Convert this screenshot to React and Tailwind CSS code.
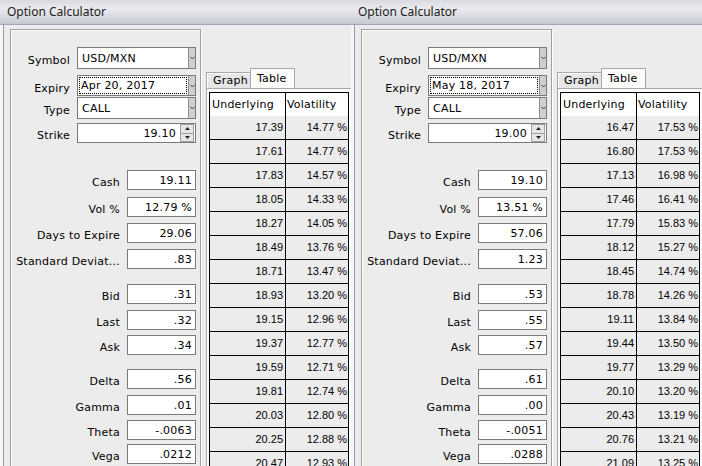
import React from "react";

const windows = [
  {
    expiry: "Apr 20, 2017",
    strike: "19.10",
    fields: [
      ["Cash", "19.11", "mt-[27px]"],
      ["Vol %", "12.79 %", "mt-[7px]"],
      ["Days to Expire", "29.06", "mt-[6px]"],
      ["Standard Deviat...", ".83", "mt-[6px]"],
      ["Bid", ".31", "mt-[15px]"],
      ["Last", ".32", "mt-[6px]"],
      ["Ask", ".34", "mt-[5px]"],
      ["Delta", ".56", "mt-[14px]"],
      ["Gamma", ".01", "mt-[6px]"],
      ["Theta", "-.0063", "mt-[5px]"],
      ["Vega", ".0212", "mt-[4px]"],
    ],
    rows: [
      ["17.39", "14.77"], ["17.61", "14.77"], ["17.83", "14.57"], ["18.05", "14.33"],
      ["18.27", "14.05"], ["18.49", "13.76"], ["18.71", "13.47"], ["18.93", "13.20"],
      ["19.15", "12.96"], ["19.37", "12.77"], ["19.59", "12.71"], ["19.81", "12.74"],
      ["20.03", "12.80"], ["20.25", "12.88"], ["20.47", "12.93"],
    ],
  },
  {
    expiry: "May 18, 2017",
    strike: "19.00",
    fields: [
      ["Cash", "19.10", "mt-[27px]"],
      ["Vol %", "13.51 %", "mt-[7px]"],
      ["Days to Expire", "57.06", "mt-[6px]"],
      ["Standard Deviat...", "1.23", "mt-[6px]"],
      ["Bid", ".53", "mt-[15px]"],
      ["Last", ".55", "mt-[6px]"],
      ["Ask", ".57", "mt-[5px]"],
      ["Delta", ".61", "mt-[14px]"],
      ["Gamma", ".00", "mt-[6px]"],
      ["Theta", "-.0051", "mt-[5px]"],
      ["Vega", ".0288", "mt-[4px]"],
    ],
    rows: [
      ["16.47", "17.53"], ["16.80", "17.53"], ["17.13", "16.98"], ["17.46", "16.41"],
      ["17.79", "15.83"], ["18.12", "15.27"], ["18.45", "14.74"], ["18.78", "14.26"],
      ["19.11", "13.84"], ["19.44", "13.50"], ["19.77", "13.29"], ["20.10", "13.20"],
      ["20.43", "13.19"], ["20.76", "13.21"], ["21.09", "13.25"],
    ],
  },
];

function DropButton() {
  return (
    <div className="w-[7px] h-full flex items-center justify-center border-l border-[#8c8c8c] bg-[#cfcfcf]">
      <svg width="5" height="4" viewBox="0 0 5 4">
        <path d="M0.5 0.8 L2.5 3 L4.5 0.8" fill="none" stroke="#404040" strokeWidth="1" />
      </svg>
    </div>
  );
}

function Combo({ value, focus }) {
  return (
    <div className="flex h-full w-full border border-[#7a7a7a] bg-white">
      <div className="flex-1 flex items-center p-[1px]">
        {focus ? (
          <div className="flex-1 h-full flex items-center pl-[1px] border border-dotted border-black">{value}</div>
        ) : (
          <div className="pl-[3px]">{value}</div>
        )}
      </div>
      <DropButton />
    </div>
  );
}

function Spinner({ value }) {
  return (
    <div className="flex items-center h-full w-full border border-[#7a7a7a] bg-white">
      <div className="flex-1 text-right pr-[4px]">{value}</div>
      <div className="w-[14px] h-[18px] mr-[1px] flex flex-col border border-[#a0a0a0] bg-[#e6e6e6]">
        <div className="flex-1 flex items-center justify-center border-b border-[#a0a0a0]">
          <svg width="5" height="3" viewBox="0 0 5 3"><path d="M0 3 L2.5 0 L5 3 Z" fill="#222" /></svg>
        </div>
        <div className="flex-1 flex items-center justify-center">
          <svg width="5" height="3" viewBox="0 0 5 3"><path d="M0 0 L2.5 3 L5 0 Z" fill="#222" /></svg>
        </div>
      </div>
    </div>
  );
}

function Window({ data }) {
  return (
    <div className="w-[351px] h-[466px] shrink-0 overflow-hidden flex flex-col bg-[#ececec]">
      {/* title bar */}
      <div className="h-[25px] shrink-0 flex items-center pl-[7px] border-b border-[#a4a4bc] bg-[linear-gradient(to_bottom,#d9dae1_0%,#ebebef_35%,#c6c8d3_100%)] font-['Noto_Sans',sans-serif] text-[12px] tracking-normal text-[#1c1c1c]">
        Option Calculator
      </div>

      <div className="flex-1 flex border-l-[3px] border-[#f6f6f8]">
        <div className="flex-1 flex items-start border-l border-[#9a98b8]">
          {/* inputs group */}
          <div className="ml-[6px] mt-[4px] w-[191px] h-[460px] shrink-0 border border-[#a0a0a0] shadow-[1px_1px_0_#fff,inset_1px_1px_0_#fff]">
            <div className="flex items-center h-[22px] mt-[17px]">
              <div className="w-[59px] text-right pt-[5px]">Symbol</div>
              <div className="ml-[7px] w-[119px] h-full"><Combo value="USD/MXN" /></div>
            </div>
            <div className="flex items-center h-[21px] mt-[6px]">
              <div className="w-[59px] text-right pt-[5px]">Expiry</div>
              <div className="ml-[7px] w-[119px] h-full"><Combo value={data.expiry} focus /></div>
            </div>
            <div className="flex items-center h-[22px] mt-[1px]">
              <div className="w-[59px] text-right pt-[5px]">Type</div>
              <div className="ml-[7px] w-[119px] h-full"><Combo value="CALL" /></div>
            </div>
            <div className="flex items-center h-[20px] mt-[4px]">
              <div className="w-[59px] text-right pt-[5px]">Strike</div>
              <div className="ml-[7px] w-[119px] h-full"><Spinner value={data.strike} /></div>
            </div>

            {data.fields.map(([label, value, mt]) => (
              <div key={label} className={"flex items-center h-[20px] " + mt}>
                <div className="w-[109px] text-right whitespace-nowrap pt-[5px]">{label}</div>
                <div className="ml-[7px] w-[69px] h-full flex items-center justify-end pr-[3px] border border-[#7a7a7a] bg-white">
                  {value}
                </div>
              </div>
            ))}
          </div>

          {/* tab control */}
          <div className="ml-[5px] mt-[43px] w-[160px] shrink-0 flex flex-col">
            <div className="flex items-end h-[20px]">
              <div className="w-[44px] h-[16px] pl-[6px] flex items-center border-t border-l border-[#a8a8a8] bg-[#e6e6e6] shadow-[inset_1px_1px_0_#fff]">
                Graph
              </div>
              <div className="w-[45px] h-[21px] -mb-[1px] pl-[6px] pb-[2px] flex items-center border-t border-l border-r border-[#a8a8a8] bg-[#fbfbfb]">
                Table
              </div>
            </div>
            <div className="h-[400px] border-t border-l border-[#a8a8a8] bg-[#fbfbfb] pl-[2px] pt-[3px]">
              <div className="border-t border-l border-black w-[140px] font-['Liberation_Sans',Arial,sans-serif] tracking-normal">
                <div className="flex h-[23px] bg-white font-['DejaVu_Sans',sans-serif] tracking-[0.2px]">
                  <div className="w-[76px] border-r border-black pl-[2px] flex items-center">Underlying</div>
                  <div className="w-[63px] border-r border-black pl-[1px] flex items-center">Volatility</div>
                </div>
                {data.rows.map(([u, v]) => (
                  <div key={u} className="flex h-[24px] border-b border-black bg-[#ececec]">
                    <div className="w-[76px] border-r border-black pr-[2px] flex items-center justify-end">{u}</div>
                    <div className="w-[63px] border-r border-black pr-[1px] flex items-center justify-end">{v} %</div>
                  </div>
                ))}
              </div>
            </div>
          </div>
        </div>
      </div>
    </div>
  );
}

export default function App() {
  return (
    <div className="w-[702px] h-[466px] overflow-hidden flex bg-white font-['DejaVu_Sans',sans-serif] text-[11px] tracking-[0.22px] text-black leading-none">
      {windows.map((w, i) => (
        <Window key={i} data={w} />
      ))}
    </div>
  );
}
